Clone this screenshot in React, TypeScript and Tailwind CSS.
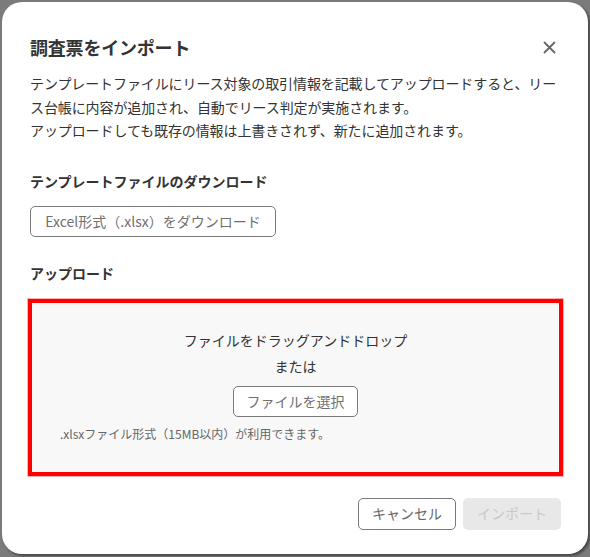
import React from "react";

export default function App() {
  const font = { fontFamily: '"Noto Sans CJK JP", "Noto Sans", sans-serif' };
  return (
    <div className="w-[590px] h-[557px] bg-[#7b7b7b] pt-[2px] pl-[2px] overflow-hidden" style={font}>
      <div className="w-[586px] h-[552px] rounded-[20px] bg-white pl-[28px] pr-[27px] text-[#333333] shadow-[2px_2px_3px_rgba(0,0,0,0.45)]">
        <div className="pt-[31px] h-[59px] flex items-center justify-between">
          <h1 className="text-[18px] font-bold leading-[28px] tracking-[-0.2px]">調査票をインポート</h1>
          <button className="w-[24px] h-[24px] flex items-center justify-center text-[#666]">
            <svg width="13" height="13" viewBox="0 0 13 13" fill="none" stroke="currentColor" strokeWidth="1.8" strokeLinecap="round">
              <path d="M1.5 1.5 L11.5 11.5 M11.5 1.5 L1.5 11.5" />
            </svg>
          </button>
        </div>
        <p className="mt-[11px] text-[14px] leading-[23.5px] whitespace-nowrap tracking-[-0.1px]">
          テンプレートファイルにリース対象の取引情報を記載してアップロードすると、リー
          <br />
          ス台帳に内容が追加され、自動でリース判定が実施されます。
          <br />
          アップロードしても既存の情報は上書きされず、新たに追加されます。
        </p>
        <h2 className="mt-[26px] text-[14px] font-bold leading-[24px]">テンプレートファイルのダウンロード</h2>
        <button className="mt-[13px] h-[31px] w-[246px] border border-[#7a7a7a] rounded-[5px] text-[14px] text-[#707070] flex items-center justify-center">
          Excel形式（.xlsx）をダウンロード
        </button>
        <h2 className="mt-[24px] text-[14px] font-bold leading-[24px]">アップロード</h2>
        <div className="mt-[14px] ml-[-2px] w-[535px] h-[177px] border-4 border-[#ff0000] bg-[#f8f8f8] flex flex-col items-center shadow-[0_0_0_1px_rgba(255,80,80,0.45)]">
          <p className="pt-[24px] text-[14px] leading-[26px] text-center">ファイルをドラッグアンドドロップ</p>
          <p className="text-[14px] leading-[26px] text-center">または</p>
          <button className="mt-[7px] h-[31px] w-[125px] border border-[#7a7a7a] rounded-[5px] bg-white text-[14px] text-[#707070] flex items-center justify-center">
            ファイルを選択
          </button>
          <p className="self-start mt-[8px] pl-[28px] text-[12px] leading-[18px] text-[#666]">
            .xlsxファイル形式（15MB以内）が利用できます。
          </p>
        </div>
        <div className="mt-[22px] flex justify-end gap-[7px]">
          <button className="w-[98px] h-[32px] border border-[#7a7a7a] rounded-[5px] bg-white text-[14px] text-[#666] flex items-center justify-center">
            キャンセル
          </button>
          <button className="w-[98px] h-[32px] rounded-[5px] bg-[#e8e8e8] text-[14px] text-[#c8c8c8] flex items-center justify-center">
            インポート
          </button>
        </div>
      </div>
    </div>
  );
}
